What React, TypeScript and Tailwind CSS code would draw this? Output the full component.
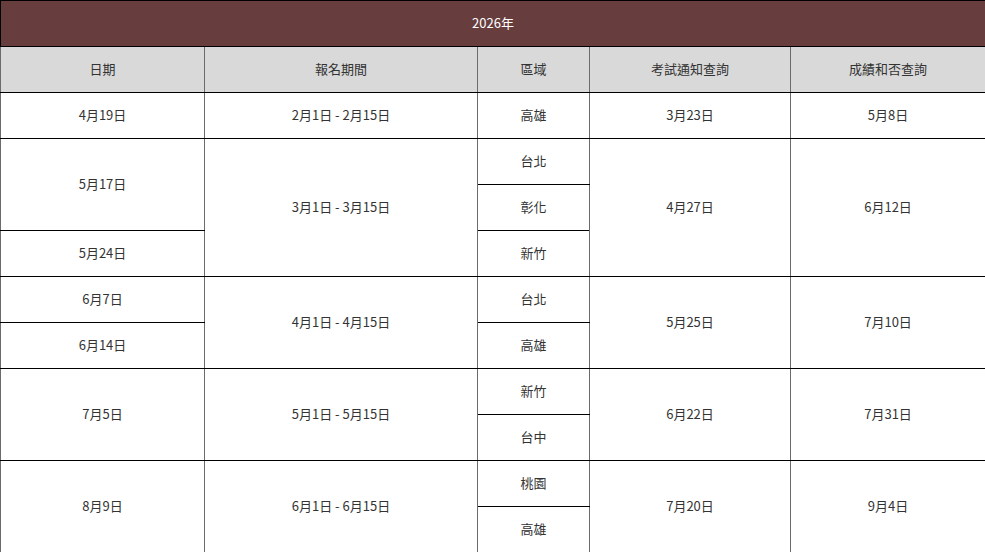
const font = { fontFamily: '"Noto Sans CJK TC", "Noto Sans", sans-serif' }

type Cell = { text: string; rows?: number }

const body: Cell[][] = [
  [{ text: "4月19日" }, { text: "2月1日 - 2月15日" }, { text: "高雄" }, { text: "3月23日" }, { text: "5月8日" }],
  [{ text: "5月17日", rows: 2 }, { text: "3月1日 - 3月15日", rows: 3 }, { text: "台北" }, { text: "4月27日", rows: 3 }, { text: "6月12日", rows: 3 }],
  [{ text: "彰化" }],
  [{ text: "5月24日" }, { text: "新竹" }],
  [{ text: "6月7日" }, { text: "4月1日 - 4月15日", rows: 2 }, { text: "台北" }, { text: "5月25日", rows: 2 }, { text: "7月10日", rows: 2 }],
  [{ text: "6月14日" }, { text: "高雄" }],
  [{ text: "7月5日", rows: 2 }, { text: "5月1日 - 5月15日", rows: 2 }, { text: "新竹" }, { text: "6月22日", rows: 2 }, { text: "7月31日", rows: 2 }],
  [{ text: "台中" }],
  [{ text: "8月9日", rows: 2 }, { text: "6月1日 - 6月15日", rows: 2 }, { text: "桃園" }, { text: "7月20日", rows: 2 }, { text: "9月4日", rows: 2 }],
  [{ text: "高雄" }],
]

const heads = ["日期", "報名期間", "區域", "考試通知查詢", "成績和否查詢"]

export default function App() {
  return (
    <div className="w-[985px] bg-white" style={font}>
      <table className="w-full table-fixed border-collapse text-[13px] text-[#333]">
        <colgroup>
          <col className="w-[204px]" />
          <col className="w-[273px]" />
          <col className="w-[112px]" />
          <col className="w-[201px]" />
          <col className="w-[195px]" />
        </colgroup>
        <thead>
          <tr className="h-[46px]">
            <th colSpan={5} className="border border-black bg-[#673d3d] pb-[2px] text-center font-normal text-white">
              2026年
            </th>
          </tr>
          <tr className="h-[46px]">
            {heads.map((h) => (
              <th
                key={h}
                className="border-x border-x-[#6b6b6b] border-y border-y-black bg-[#d9d9d9] pb-[2px] text-center font-normal"
              >
                {h}
              </th>
            ))}
          </tr>
        </thead>
        <tbody>
          {body.map((row, i) => (
            <tr key={i} className="h-[46px]">
              {row.map((c, j) => (
                <td
                  key={j}
                  rowSpan={c.rows}
                  className="border-x border-x-[#6b6b6b] border-y border-y-black pb-[2px] text-center align-middle"
                >
                  {c.text}
                </td>
              ))}
            </tr>
          ))}
        </tbody>
      </table>
    </div>
  )
}
